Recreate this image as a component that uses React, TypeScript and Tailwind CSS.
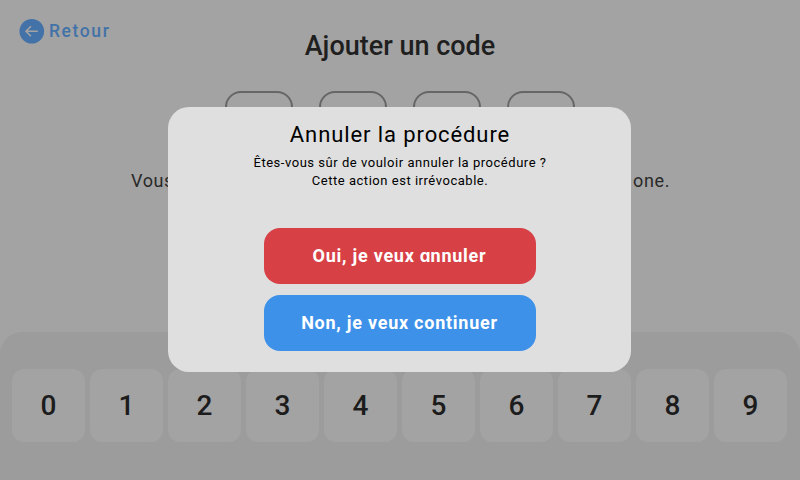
import React from "react";

const digits = ["0", "1", "2", "3", "4", "5", "6", "7", "8", "9"];

function BackButton() {
  return (
    <button className="absolute left-[19px] top-[18px] flex items-center text-[#4272a8]">
      <svg width="26" height="26" viewBox="0 0 26 26" fill="none">
        <circle cx="12.8" cy="13.2" r="12.3" fill="currentColor" />
        <path d="M18.8 13.2H7.4M12 8.2L7 13.2L12 18.2" stroke="#a3a3a3" strokeWidth="1.6" />
      </svg>
      <span className="ml-[4px] text-[17.5px] font-medium leading-[26px] tracking-[1.6px]">Retour</span>
    </button>
  );
}

function Keypad() {
  return (
    <div className="flex h-[148px] shrink-0 gap-[5px] rounded-t-[22px] bg-[#9c9c9c] pl-[12px] pt-[37px]">
      {digits.map((digit) => (
        <button
          key={digit}
          className="flex h-[73px] w-[73px] items-center justify-center rounded-[12px] bg-[#a3a3a3] pt-px text-[28px] font-medium text-[#1c1c1c]"
        >
          {digit}
        </button>
      ))}
    </div>
  );
}

function CancelDialog() {
  return (
    <div className="absolute left-[168px] top-[107px] flex h-[265px] w-[463px] flex-col items-center rounded-[21px] bg-[#dfdfdf] text-black">
      <h2 className="ml-px mt-[14px] text-[22px] leading-[28px] tracking-[0.9px]">Annuler la procédure</h2>
      <p className="ml-px mt-[5px] text-center text-[13px] leading-[18px] tracking-[0.53px]">
        Êtes-vous sûr de vouloir annuler la procédure ?<br />
        Cette action est irrévocable.
      </p>
      <div className="ml-px mt-[38px] flex flex-col gap-[11px] text-[18px] font-bold tracking-[0.75px] text-white">
        <button className="h-[56px] w-[272px] rounded-[16px] bg-[#d74146] pb-[2px] pr-px">
          <span>
            Oui, je veux{" "}
            <span className="font-['Inter'] text-[17px] leading-none tracking-[0px] [font-feature-settings:'cv11']">a</span>
            nnuler
          </span>
        </button>
        <button className="h-[56px] w-[272px] rounded-[16px] bg-[#3d91e8] pb-[2px] pr-px">Non, je veux continuer</button>
      </div>
    </div>
  );
}

export default function App() {
  return (
    <div className="relative flex h-[480px] w-[800px] flex-col overflow-hidden bg-[#a3a3a3] font-['Roboto',sans-serif]">
      <BackButton />
      <h1 className="mt-[28px] text-center text-[27px] font-medium leading-[36px] text-[#1f1f1f]">Ajouter un code</h1>
      <div className="mt-[27px] flex justify-center gap-[26px]">
        {[0, 1, 2, 3].map((slot) => (
          <div key={slot} className="h-[68px] w-[68px] rounded-[16px] border-2 border-[#666666]" />
        ))}
      </div>
      <div className="ml-[131px] mr-[130px] mt-[10px] flex justify-between text-[18px] leading-[24px] tracking-[0.6px] text-[#292929]">
        <span>Vous</span>
        <span>one.</span>
      </div>
      <div className="grow" />
      <Keypad />
      <CancelDialog />
    </div>
  );
}
